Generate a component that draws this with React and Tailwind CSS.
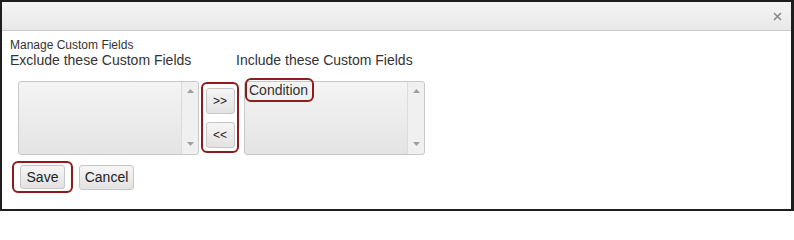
import React from "react";

function UpArrow() {
  return (
    <svg width="7" height="4" viewBox="0 0 7 4"><path d="M0 4 L3.5 0 L7 4 Z" fill="#a0a0a0" /></svg>
  );
}
function DownArrow() {
  return (
    <svg width="7" height="4" viewBox="0 0 7 4"><path d="M0 0 L3.5 4 L7 0 Z" fill="#a0a0a0" /></svg>
  );
}

function ListBox({ children }) {
  return (
    <div className="relative flex w-[181px] h-[74px] rounded-[3px] border border-[#c8c8c8] bg-gradient-to-b from-[#f4f4f4] to-[#e4e4e4] overflow-visible">
      <div className="flex-1 relative">{children}</div>
      <div className="w-[17px] border-l border-[#dcdcdc] flex flex-col items-center justify-between pt-[7px] pb-[8px] bg-[#f0f0f0] rounded-r-[3px]">
        <UpArrow />
        <DownArrow />
      </div>
    </div>
  );
}

function Btn({ children, className = "" }) {
  return (
    <button className={"rounded-[3px] border border-[#c6c6c6] bg-gradient-to-b from-[#f6f6f6] to-[#e2e2e2] text-[#222] " + className}>
      {children}
    </button>
  );
}

export default function App() {
  return (
    <div
      className="w-[794px] h-[211px] border-2 border-r-[3px] border-[#1e1e1e] bg-white flex flex-col text-[#333]"
      style={{ fontFamily: '"Liberation Sans", Arial, sans-serif' }}
    >
      <div className="h-[29px] bg-gradient-to-b from-[#f4f4f4] to-[#e8e8e8] border-b border-[#c9c9c9] flex items-center justify-end pr-[9px]">
        <svg width="9" height="9" viewBox="0 0 9 9" className="mt-[1px]">
          <path d="M1 1 L8 8 M8 1 L1 8" stroke="#8a8a8a" strokeWidth="1.6" />
        </svg>
      </div>
      <div className="flex flex-col pl-[8px] pt-[7px]">
        <div className="text-[12px] leading-[14px] text-[#333]">Manage Custom Fields</div>
        <div className="flex text-[14px] leading-[17px] text-[#333]">
          <span className="w-[226px]">Exclude these Custom Fields</span>
          <span>Include these Custom Fields</span>
        </div>
        <div className="flex items-start pl-[8px] mt-[12px]">
          <ListBox />
          <div className="ml-[2px] mt-[1px] w-[38px] h-[71px] rounded-[6px] border-2 border-[#8f1c1c] flex flex-col items-center pt-[4px] gap-[8px]">
            <Btn className="w-[29px] h-[26px] text-[12px] leading-none">&gt;&gt;</Btn>
            <Btn className="w-[29px] h-[26px] text-[12px] leading-none">&lt;&lt;</Btn>
          </div>
          <div className="ml-[5px]">
            <ListBox>
              <div className="absolute left-[0px] top-[-4px] w-[69px] h-[24px] rounded-[6px] border-2 border-[#8f1c1c] pl-[2px] text-[14px] leading-[20px] text-[#333]">
                Condition
              </div>
            </ListBox>
          </div>
        </div>
        <div className="flex items-center mt-[6px] pl-[2px]">
          <div className="w-[61px] h-[32px] rounded-[6px] border-2 border-[#8f1c1c] flex items-center justify-center">
            <Btn className="w-[45px] h-[24px] text-[14px] leading-none">Save</Btn>
          </div>
          <Btn className="ml-[6px] w-[55px] h-[25px] text-[14px] leading-none">Cancel</Btn>
        </div>
      </div>
    </div>
  );
}
